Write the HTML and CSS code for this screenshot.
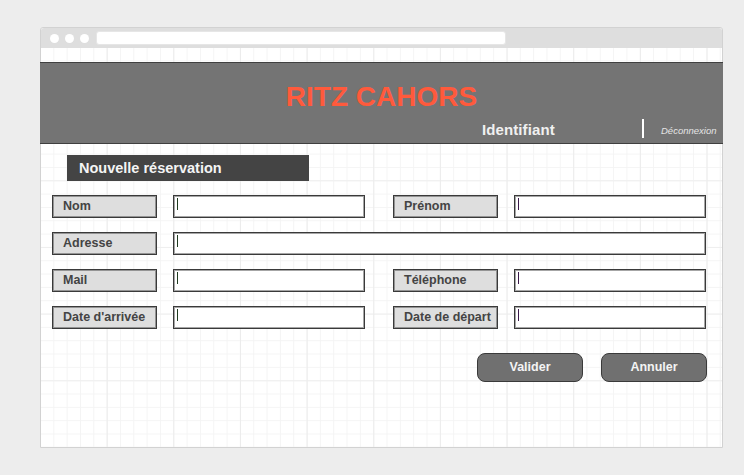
FILE: index.html
```html
<!DOCTYPE html>
<html lang="fr">
<head>
<meta charset="utf-8">
<title>Ritz Cahors - Nouvelle réservation</title>
<link rel="stylesheet" href="styles.css">
</head>
<body>
<div class="window">
  <div class="topbar">
    <span class="dot"></span><span class="dot"></span><span class="dot"></span>
    <span class="url"></span>
  </div>
  <div class="content">
    <header class="header">
      <h1 class="title">RITZ CAHORS</h1>
      <div class="sub">
        <span class="ident">Identifiant</span>
        <span class="bar"></span>
        <span class="deco">Déconnexion</span>
      </div>
    </header>
    <h2 class="section">Nouvelle réservation</h2>
    <div class="form">
      <div class="label c1">Nom</div>
      <div class="input c3"><span class="caret"></span></div>
      <div class="label c5">Prénom</div>
      <div class="input c7"><span class="caret purple"></span></div>

      <div class="label c1">Adresse</div>
      <div class="input wide"><span class="caret"></span></div>

      <div class="label c1">Mail</div>
      <div class="input c3"><span class="caret"></span></div>
      <div class="label c5">Téléphone</div>
      <div class="input c7"><span class="caret purple"></span></div>

      <div class="label c1">Date d'arrivée</div>
      <div class="input c3"><span class="caret"></span></div>
      <div class="label c5">Date de départ</div>
      <div class="input c7"><span class="caret purple"></span></div>
    </div>
    <div class="actions">
      <button class="btn">Valider</button>
      <button class="btn">Annuler</button>
    </div>
  </div>
</div>
</body>
</html>
```

FILE: styles.css
```css
html, body {
  margin: 0;
  padding: 0;
}
body {
  background: #ededed;
  font-family: "Liberation Sans", Arial, sans-serif;
  width: 744px;
  height: 475px;
  overflow: hidden;
}
.window {
  margin: 27px 0 0 40px;
  width: 683px;
  height: 421px;
  box-sizing: border-box;
  border: 1px solid #d2d2d2;
  border-radius: 3px 3px 0 0;
  display: flex;
  flex-direction: column;
  background: #fff;
}
.topbar {
  height: 20px;
  background: #dedede;
  display: flex;
  align-items: center;
  padding-left: 9px;
  gap: 6px;
  border-radius: 3px 3px 0 0;
}
.dot {
  width: 9px;
  height: 9px;
  border-radius: 50%;
  background: #fff;
}
.dot:nth-child(3) {
  margin-right: 1px;
}
.url {
  width: 408px;
  height: 12px;
  background: #fff;
  border-radius: 3px;
  border: 1px solid #e6e6e6;
}
.content {
  flex: 1;
  background-color: #fff;
  background-image:
    linear-gradient(to right, #ececec 1px, transparent 1px),
    linear-gradient(to bottom, #efefef 1px, transparent 1px),
    linear-gradient(to right, #f4f4f4 1px, transparent 1px),
    linear-gradient(to bottom, #f4f4f4 1px, transparent 1px);
  background-size: 66.667px 66.667px, 66.667px 66.667px, 13.333px 13.333px, 13.333px 13.333px;
  background-position: -1px -1px;
  padding-top: 14px;
  display: flex;
  flex-direction: column;
}
.header {
  height: 82px;
  box-sizing: border-box;
  background: #747474;
  border-top: 1px solid #3f3f3f;
  border-bottom: 1px solid #3f3f3f;
  padding-top: 18px;
  margin: 0 -1px 0 -1px;
}
.title {
  margin: 0;
  text-align: center;
  font-size: 28px;
  line-height: 32px;
  font-weight: bold;
  color: #ff5a3c;
}
.sub {
  margin-top: 6px;
  height: 19px;
  display: flex;
  align-items: center;
  padding-left: 442px;
}
.ident {
  width: 160px;
  font-size: 15px;
  font-weight: bold;
  color: #f0f0f0;
  letter-spacing: 0.1px;
  padding-top: 2px;
}
.bar {
  width: 2px;
  height: 19px;
  background: #fff;
}
.deco {
  margin-left: 17px;
  font-size: 9.5px;
  font-style: italic;
  color: #e4e4e4;
  padding-top: 4px;
}
.section {
  margin: 11px 0 0 26px;
  width: 242px;
  height: 26px;
  box-sizing: border-box;
  background: #444;
  color: #f4f4f4;
  font-size: 14.5px;
  line-height: 26px;
  font-weight: bold;
  padding-left: 12px;
}
.form {
  margin: 14px 0 0 11px;
  display: grid;
  grid-template-columns: 105px 16px 192px 28px 105px 16px 192px;
  grid-auto-rows: 23px;
  row-gap: 14px;
}
.label {
  box-sizing: border-box;
  border: 1px solid #3a3a3a;
  box-shadow: inset 0 0 0 1px rgba(58, 58, 58, 0.45);
  background: #dedede;
  color: #444;
  font-size: 12.5px;
  font-weight: bold;
  line-height: 21px;
  padding-left: 10px;
  white-space: nowrap;
}
.input {
  box-sizing: border-box;
  border: 1px solid #3a3a3a;
  box-shadow: inset 0 0 0 1px rgba(58, 58, 58, 0.45);
  background: #fff;
  position: relative;
}
.c1 { grid-column: 1; }
.c3 { grid-column: 3; }
.c5 { grid-column: 5; }
.c7 { grid-column: 7; }
.wide { grid-column: 3 / 8; }
.caret {
  position: absolute;
  left: 3px;
  top: 2px;
  width: 1px;
  height: 12px;
  background: #1f3a1f;
}
.caret.purple {
  background: #3a1a4a;
}
.actions {
  margin-top: 24px;
  display: flex;
  justify-content: flex-end;
  gap: 18px;
  padding-right: 15px;
}
.btn {
  width: 106px;
  height: 29px;
  box-sizing: border-box;
  border: 1px solid #3a3a3a;
  border-radius: 8px;
  background: #707070;
  color: #f4f4f4;
  font-family: "Liberation Sans", Arial, sans-serif;
  font-size: 12.5px;
  font-weight: bold;
  padding: 0 0 2px;
}
```
